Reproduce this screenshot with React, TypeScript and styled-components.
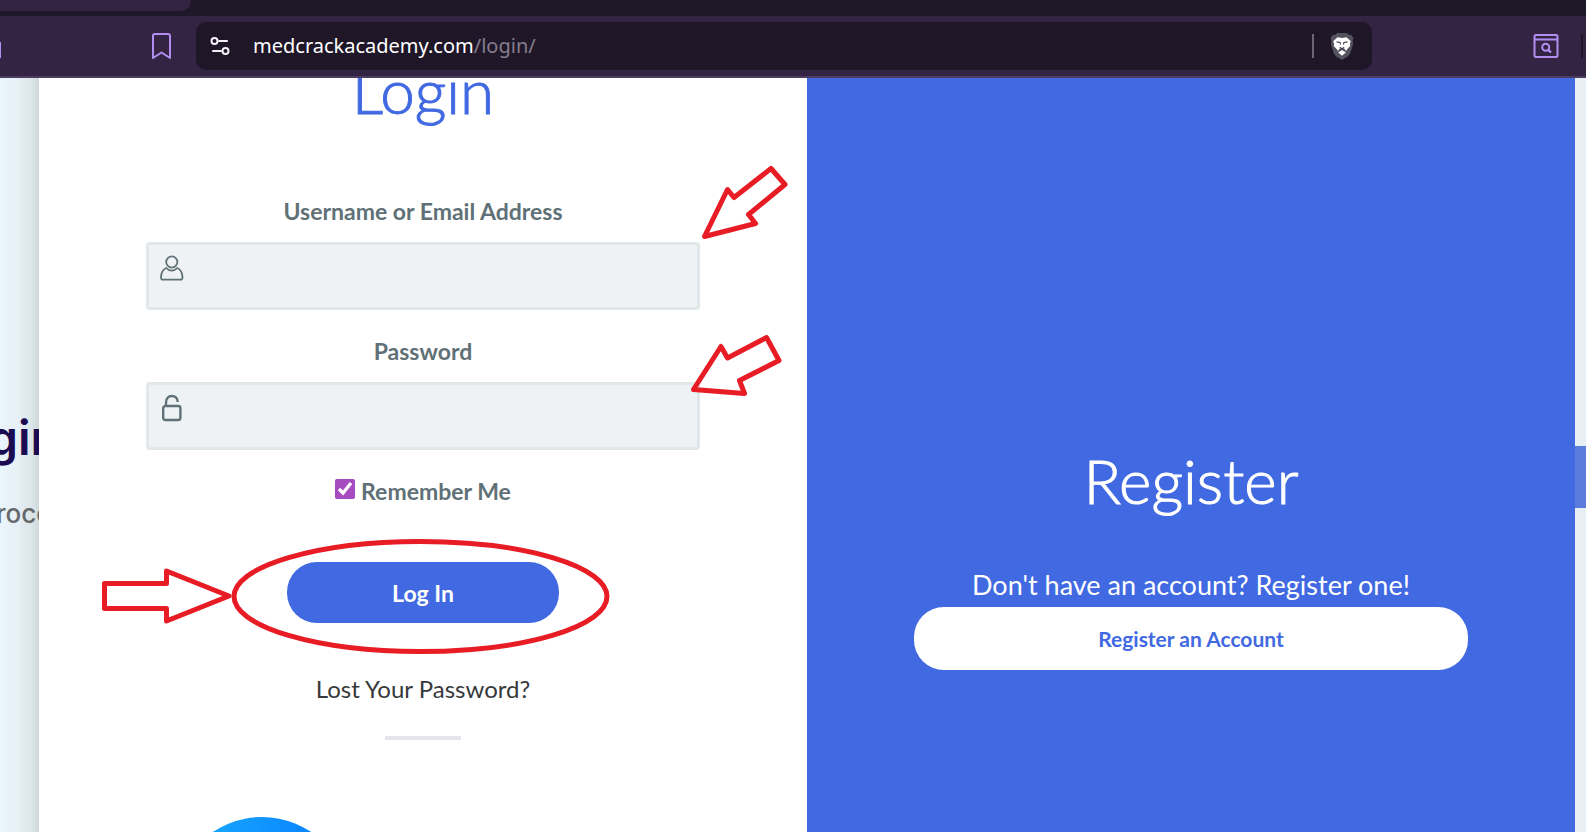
import React from 'react';
import styled, { createGlobalStyle } from 'styled-components';

const BRAND = '#4169e1';

const GlobalStyle = createGlobalStyle`
  *, *::before, *::after { box-sizing: border-box; }
  body { margin: 0; font-family: Lato, sans-serif; color: #5f7176; }
  h1, h2, p { margin: 0; }
  button, input { font: inherit; }
`;

const Window = styled.div`
  position: relative;
  display: flex;
  flex-direction: column;
  height: 100vh;
  overflow: hidden;
`;

const TabStrip = styled.div`
  flex: none;
  height: 16px;
  background: #1f1829;
`;

const ActiveTab = styled.div`
  width: 191px;
  height: 11px;
  border-radius: 0 0 10px 0;
  background: #342444;
`;

const Toolbar = styled.header`
  flex: none;
  display: flex;
  align-items: center;
  height: 62px;
  border-bottom: 2px solid #4c3c60;
  background: #342443;
`;

const EdgeMark = styled.span`
  width: 1px;
  height: 16px;
  margin-top: 8px;
  background: #b18ff0;
`;

const IconButton = styled.button`
  display: flex;
  padding: 0;
  border: 0;
  background: none;
  color: #b18ff0;
`;

const BookmarkButton = styled(IconButton)`
  margin: 0 24px 0 150px;
`;

const AddressBar = styled.div`
  flex: 1;
  display: flex;
  align-items: center;
  height: 48px;
  padding: 0 18px 0 14px;
  border-radius: 10px;
  background: #1f1728;
`;

const Url = styled.div`
  flex: 1;
  margin-left: 22px;
  font-family: 'Noto Sans', sans-serif;
  font-size: 20px;
  line-height: 28px;
  color: #fff;
  span { color: #857d8d; }
`;

const Separator = styled.span<{ $color: string }>`
  width: 2px;
  height: 24px;
  background: ${(p) => p.$color};
`;

const ShieldButton = styled(IconButton)`
  margin-left: 16px;
`;

const ToolbarEnd = styled.div`
  display: flex;
  align-items: center;
  gap: 22px;
  padding: 0 3px 0 161px;
`;

const Viewport = styled.main`
  flex: 1;
  display: flex;
  min-height: 0;
  overflow: hidden;
  background: #e8eff4;
`;

const Backdrop = styled.aside`
  flex: none;
  width: 39px;
  padding-top: 328px;
  overflow: hidden;
  white-space: nowrap;
  background: linear-gradient(90deg, #eaf5fc 0%, #e6f0f5 45%, #dce5e8 80%, #d0d9da 100%);
`;

const BackdropTitle = styled.h2`
  margin-left: -12px;
  font: 600 48px/64px Inter, sans-serif;
  color: #1b0c52;
`;

const BackdropText = styled.p`
  margin: 24px 0 0 -4px;
  font: 500 26px/40px Inter, sans-serif;
  color: #66686b;
`;

const Gutter = styled.aside`
  flex: none;
  width: 11px;
  padding-top: 368px;
`;

const GutterTab = styled.div`
  height: 62px;
  background: #5b7bdd;
`;

const Panel = styled.section<{ $filled?: boolean }>`
  flex: 1;
  display: flex;
  flex-direction: column;
  align-items: center;
  min-width: 0;
  padding: 0 107px;
  overflow: hidden;
  background: ${(p) => (p.$filled ? BRAND : '#fff')};
  color: ${(p) => (p.$filled ? '#fff' : 'inherit')};
`;

const Heading = styled.h1<{ $color: string }>`
  font-size: 62px;
  font-weight: 300;
  line-height: 72px;
  color: ${(p) => p.$color};
  -webkit-text-stroke: 1px currentColor;
`;

const LoginHeading = styled(Heading)`
  flex: none;
  margin-top: -24px;
`;

const RegisterHeading = styled(Heading)`
  margin-top: 366px;
`;

const Form = styled.form`
  display: flex;
  flex-direction: column;
  align-items: center;
  width: 100%;
  margin-top: 69px;
`;

const FieldGroup = styled.div`
  width: 100%;
  margin-bottom: 25px;
`;

const Label = styled.label`
  display: block;
  font-size: 23px;
  font-weight: 700;
  line-height: 32px;
  text-align: center;
`;

const Field = styled.div`
  display: flex;
  height: 68px;
  margin-top: 15px;
  border: 3px solid #e2e7ea;
  border-radius: 4px;
  background: #eef2f5;
`;

const FieldIcon = styled.span`
  display: flex;
  padding: 9px 10px;
`;

const Input = styled.input`
  flex: 1;
  min-width: 0;
  border: 0;
  outline: 0;
  background: transparent;
  color: inherit;
  font-size: 22px;
`;

const Remember = styled.div`
  display: flex;
  align-items: center;
  gap: 6px;
`;

const Checkbox = styled.input`
  width: 20px;
  height: 20px;
  margin: 0 0 4px;
  accent-color: #a74bc0;
`;

const LoginButton = styled.button`
  width: 272px;
  height: 61px;
  margin-top: 55px;
  border: 0;
  border-radius: 30px;
  background: ${BRAND};
  color: #fff;
  font-size: 23px;
  font-weight: 700;
`;

const LostLink = styled.a`
  margin-top: 50px;
  font-size: 24px;
  line-height: 32px;
  color: #37393b;
  text-decoration: none;
`;

const Rule = styled.hr`
  flex: none;
  width: 76px;
  height: 4px;
  margin: 31px 0 0;
  border: 0;
  background: #e4e5ed;
`;

const ChatBubble = styled.div`
  flex: none;
  align-self: flex-start;
  width: 176px;
  height: 176px;
  margin: 77px 0 0 28px;
  border-radius: 50%;
  background: linear-gradient(90deg, #16a6ff 20%, #0a84ff 80%);
`;

const Prompt = styled.p`
  margin-top: 51px;
  font-size: 27px;
  line-height: 36px;
`;

const RegisterLink = styled.a`
  display: flex;
  align-items: center;
  justify-content: center;
  width: 100%;
  height: 63px;
  margin-top: 4px;
  border-radius: 30px;
  background: #fff;
  color: ${BRAND};
  font-size: 21px;
  font-weight: 700;
  text-decoration: none;
`;

const Markup = styled.svg`
  position: absolute;
  top: 0;
  left: 0;
  pointer-events: none;
`;

const BookmarkIcon = () => (
  <svg width="21" height="28" viewBox="0 0 21 28" fill="none" stroke="currentColor" strokeWidth="2" strokeLinejoin="round">
    <path d="M2 4a2 2 0 0 1 2-2h13a2 2 0 0 1 2 2v22l-8.500-5.500L2 26z" />
  </svg>
);

const SiteSettingsIcon = () => (
  <svg width="21" height="20" viewBox="0 0 21 20" fill="none" stroke="#f4f0f8" strokeWidth="2" strokeLinecap="round">
    <circle cx="4.500" cy="5" r="3" />
    <path d="M9 5h8" />
    <circle cx="15.500" cy="15" r="3" />
    <path d="M3 15h8" />
  </svg>
);

const ShieldIcon = () => (
  <svg width="24" height="28" viewBox="0 0 24 28">
    <path d="M7 1h10l2 2 2-.3L23.400 6l-.8 3 .5 3-3 9.500-2.300 3L12 28l-5.800-3.500-2.300-3L.9 12l.5-3-.8-3L3 2.700 5 3z" fill="#55525f" />
    <path d="M7.500 5.200 12 6l4.500-.8 4.300 4-.9 2.500.3 2.300-3.200 3.500-1.300 1.800-.7-2.300L12 15.800 9 17l-.7 2.300L7 17.500 3.800 14l.3-2.300-.9-2.500z" fill="#fff" />
    <path d="m12 18 3.800 2.400L12 23.800l-3.800-3.400z" fill="#fff" />
    <path d="m6.500 9.800 3.600.7.400 2M17.500 9.800l-3.600.7-.4 2M9.800 15.300 12 16.900l2.200-1.600" fill="none" stroke="#45414f" strokeWidth="1.200" />
  </svg>
);

const FindInPageIcon = () => (
  <svg width="26" height="24" viewBox="0 0 26 24" fill="none" stroke="currentColor" strokeWidth="2">
    <rect x="1.500" y="1" width="23" height="22" rx="1.500" />
    <path d="M2 5.500h22" />
    <circle cx="12.700" cy="13.300" r="3.500" />
    <path d="m15.200 15.800 2.800 2.700" strokeWidth="2.400" />
  </svg>
);

const UserIcon = () => (
  <svg width="26" height="28" viewBox="0 0 26 28" fill="none" stroke="#5f7176" strokeWidth="1.800" strokeLinejoin="round">
    <circle cx="12.800" cy="8" r="5.600" />
    <path d="M7.300 14C4 15.500 2 19.500 2 23.500c0 1.600.7 2.200 2 2.200h17.500c1.300 0 2-.6 2-2.200 0-4-2-8-5.300-9.500-3 3.400-7.900 3.400-10.900 0z" />
  </svg>
);

const LockIcon = () => (
  <svg width="26" height="28" viewBox="0 0 26 28" fill="none" stroke="#5f7176" strokeWidth="2.400">
    <rect x="4.200" y="12" width="17.200" height="14" rx="2.200" />
    <path d="M7 12V8.500C7 4.500 9.500 2 12.800 2c3.500 0 5.900 2.300 5.900 6" />
  </svg>
);

export default function App() {
  return (
    <Window>
      <GlobalStyle />
      <TabStrip>
        <ActiveTab />
      </TabStrip>
      <Toolbar>
        <EdgeMark />
        <BookmarkButton type="button" aria-label="Bookmark this page">
          <BookmarkIcon />
        </BookmarkButton>
        <AddressBar>
          <IconButton type="button" aria-label="Site settings">
            <SiteSettingsIcon />
          </IconButton>
          <Url>
            medcrackacademy.com<span>/login/</span>
          </Url>
          <Separator $color="#6b6574" />
          <ShieldButton type="button" aria-label="Shields">
            <ShieldIcon />
          </ShieldButton>
        </AddressBar>
        <ToolbarEnd>
          <IconButton type="button" aria-label="Find in page">
            <FindInPageIcon />
          </IconButton>
          <Separator $color="#1f1728" />
        </ToolbarEnd>
      </Toolbar>

      <Viewport>
        <Backdrop>
          <BackdropTitle>gin</BackdropTitle>
          <BackdropText>roce</BackdropText>
        </Backdrop>

        <Panel>
          <LoginHeading $color={BRAND}>Login</LoginHeading>
          <Form onSubmit={(e) => e.preventDefault()}>
            <FieldGroup>
              <Label htmlFor="username">Username or Email Address</Label>
              <Field>
                <FieldIcon>
                  <UserIcon />
                </FieldIcon>
                <Input id="username" type="text" />
              </Field>
            </FieldGroup>
            <FieldGroup>
              <Label htmlFor="password">Password</Label>
              <Field>
                <FieldIcon>
                  <LockIcon />
                </FieldIcon>
                <Input id="password" type="password" />
              </Field>
            </FieldGroup>
            <Remember>
              <Checkbox id="remember" type="checkbox" defaultChecked />
              <Label htmlFor="remember">Remember Me</Label>
            </Remember>
            <LoginButton type="submit">Log In</LoginButton>
          </Form>
          <LostLink href="#lost-password">Lost Your Password?</LostLink>
          <Rule />
          <ChatBubble />
        </Panel>

        <Panel $filled>
          <RegisterHeading as="h2" $color="#fff">
            Register
          </RegisterHeading>
          <Prompt>Don't have an account? Register one!</Prompt>
          <RegisterLink href="#register">Register an Account</RegisterLink>
        </Panel>

        <Gutter>
          <GutterTab />
        </Gutter>
      </Viewport>

      <Markup width="810" height="680" viewBox="0 0 810 680" fill="none" stroke="#e81c24" strokeWidth="5" strokeLinejoin="round" aria-hidden="true">
        <path d="M771 168.500 785 184.500 748.500 214.500 755.500 223.500 704.500 236.500 727.500 189.500 734 197.500z" />
        <path d="M766.500 337.500 779 360.500 739.500 380.500 744.500 393.500 693.500 389.500 721 346.500 727.500 358z" />
        <path d="M104.500 583.500H166.500V571L229 596 166.500 621V608.500H104.500z" />
        <ellipse cx="420.500" cy="596.500" rx="186.500" ry="55" />
      </Markup>
    </Window>
  );
}
